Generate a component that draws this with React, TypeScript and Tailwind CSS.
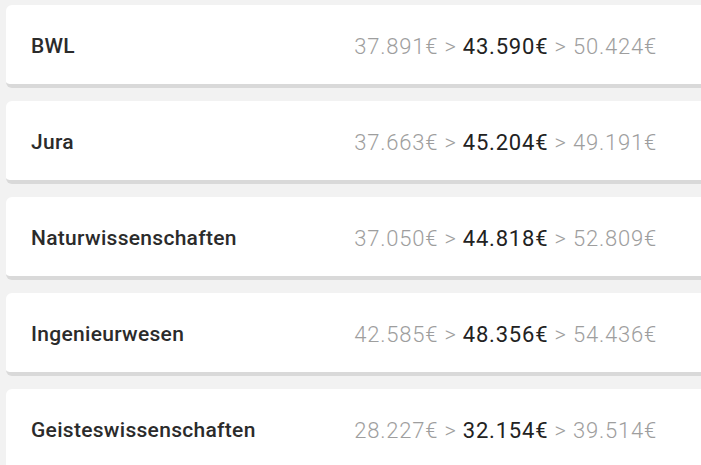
const rows = [
  { name: "BWL", low: "37.891€", mid: "43.590€", high: "50.424€" },
  { name: "Jura", low: "37.663€", mid: "45.204€", high: "49.191€" },
  { name: "Naturwissenschaften", low: "37.050€", mid: "44.818€", high: "52.809€" },
  { name: "Ingenieurwesen", low: "42.585€", mid: "48.356€", high: "54.436€" },
  { name: "Geisteswissenschaften", low: "28.227€", mid: "32.154€", high: "39.514€" },
];

export default function App() {
  return (
    <div className="min-h-screen bg-[#f2f2f2] pl-[6px] pt-[5px] font-['Roboto',sans-serif]">
      <div className="-mr-[10px] flex flex-col gap-[13px]">
        {rows.map((r) => (
          <div
            key={r.name}
            className="flex h-[83px] items-center justify-between rounded-[6px] border-b-[4px] border-[#d9d9d9] bg-white pl-[25px] pr-[54px] pt-[4px]"
          >
            <span className="text-[21px] font-medium tracking-[0.3px] text-[#2b2b2b]">{r.name}</span>
            <span className="text-[22px] font-light tracking-[0.8px] text-[#9e9e9e]">
              {r.low} &gt; <span className="font-normal text-[#222]">{r.mid}</span> &gt; {r.high}
            </span>
          </div>
        ))}
      </div>
    </div>
  );
}
